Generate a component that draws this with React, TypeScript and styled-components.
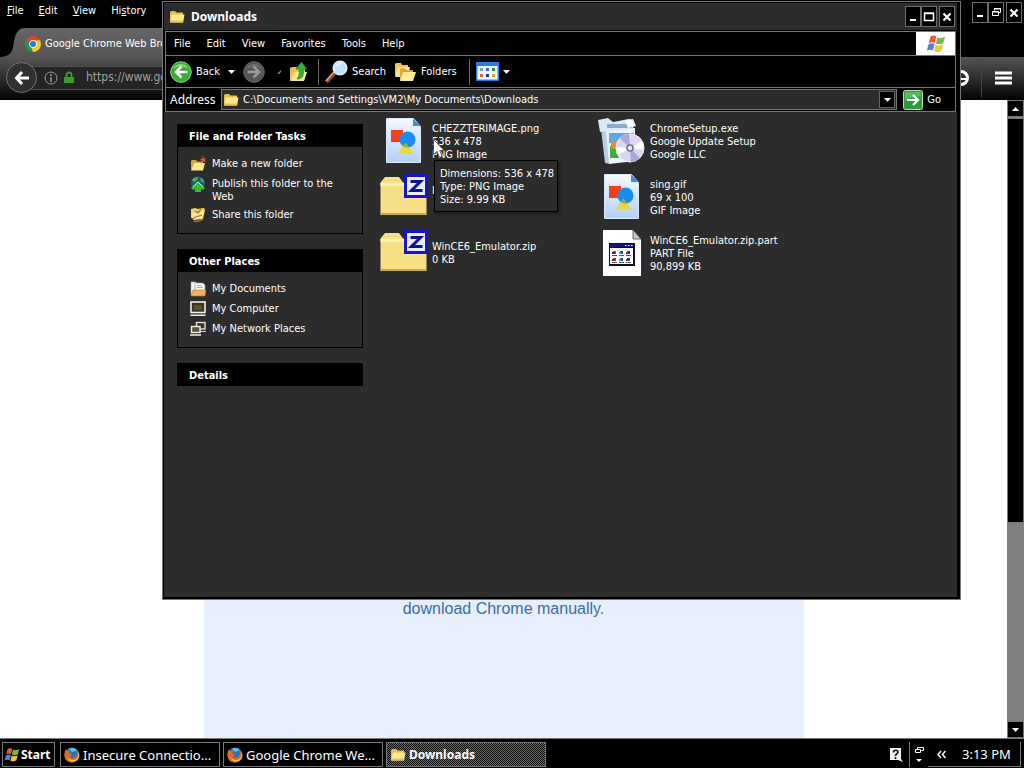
import React from "react";
import styled, { createGlobalStyle } from "styled-components";

const ui = `"DejaVu Sans Condensed", "DejaVu Sans", sans-serif`;
const caption = `"Noto Sans", sans-serif`;

const Global = createGlobalStyle`
  * { box-sizing: border-box; }
  body { margin: 0; background: #000; color: #fff; font-family: ${ui}; font-size: 11px; line-height: 13px; overflow: hidden; }
  button, input { font: inherit; color: inherit; background: none; border: 0; padding: 0; margin: 0; }
  a { color: inherit; text-decoration: none; }
  h1, h2, p { margin: 0; }
  svg { display: block; flex: none; }
`;

const Desktop = styled.div`
  position: relative;
  display: flex;
  flex-direction: column;
  height: 100vh;
  overflow: hidden;
`;

/* ---------- browser ---------- */
const Browser = styled.section`
  flex: 1;
  min-height: 0;
  display: flex;
  flex-direction: column;
`;
const BrowserTop = styled.div`
  display: flex;
  justify-content: space-between;
  height: 28px;
  padding: 2px 2px 0 7px;
`;
const BrowserMenu = styled.nav`
  display: flex;
  gap: 15px;
  height: 17px;
  align-items: center;
`;
const MenuButton = styled.button`
  white-space: nowrap;
`;
const Controls = styled.div`
  display: flex;
`;
const ControlButton = styled.button<{ $gap?: boolean }>`
  display: flex;
  align-items: center;
  justify-content: center;
  width: 16px;
  height: 21px;
  margin-left: ${(p) => (p.$gap ? 2 : 0)}px;
  background: #000;
  border: 1px solid #6e6e6e;
`;
const TabStrip = styled.div`
  display: flex;
  height: 29px;
`;
const Tab = styled.button`
  display: flex;
  align-items: center;
  width: 260px;
  padding-top: 2px;
  background: linear-gradient(#666, #545454);
  gap: 4px;
  white-space: nowrap;
`;
const NavBar = styled.div`
  display: flex;
  align-items: center;
  height: 43px;
  padding: 0 12px 2px 6px;
  background: linear-gradient(#545454, #242424 60%, #020202);
`;
const RoundButton = styled.button`
  display: flex;
  align-items: center;
  justify-content: center;
  width: 31px;
  height: 31px;
  border: 1px solid #707070;
  border-radius: 50%;
  background: #303030;
  z-index: 1;
`;
const UrlBox = styled.label`
  flex: 1;
  display: flex;
  align-items: center;
  gap: 6px;
  height: 24px;
  margin-left: -6px;
  padding-left: 12px;
  background: #242424;
  border: 1px solid #505050;
`;
const UrlText = styled.input`
  flex: 1;
  color: #a0a0a0;
  margin-left: 6px;
  font-size: 12px;
`;
const NavTools = styled.div`
  display: flex;
  align-items: center;
  margin-left: 8px;
  height: 38px;
`;
const ToolIcon = styled.button<{ $line?: boolean }>`
  display: flex;
  align-items: center;
  height: 38px;
  padding-left: 13px;
  margin-left: ${(p) => (p.$line ? 12 : 0)}px;
  border-left: ${(p) => (p.$line ? "1px solid #444" : "0")};
`;
const Viewport = styled.div`
  flex: 1;
  min-height: 0;
  display: flex;
  background: #fff;
`;
const Page = styled.main`
  flex: 1;
  display: flex;
  justify-content: center;
`;
const Notice = styled.div`
  width: 600px;
  padding-top: 499px;
  background: #e8effc;
  text-align: center;
`;
const NoticeLink = styled.a`
  font: 16px/20px "Liberation Sans", sans-serif;
  color: #3a6da4;
`;
const Scrollbar = styled.div`
  display: flex;
  flex-direction: column;
  width: 17px;
  background: #808080;
`;
const ScrollButton = styled.button`
  display: flex;
  align-items: center;
  justify-content: center;
  height: 17px;
  background: #000;
  border: 1px solid #777;
`;
const ScrollTrack = styled.div`
  flex: 1;
`;
const ScrollThumb = styled.div`
  height: 67%;
  margin-top: 1px;
  background: #000;
  border: 1px solid #777;
`;

/* ---------- explorer window ---------- */
const Window = styled.section`
  position: absolute;
  left: 162px;
  top: 1px;
  width: 799px;
  height: 599px;
  display: flex;
  flex-direction: column;
  padding: 1px 3px 2px 1px;
  background: #000;
  border: 1px solid #777;
`;
const TitleBar = styled.header`
  display: flex;
  align-items: center;
  gap: 6px;
  height: 27px;
  padding: 0 2px 0 5px;
  background: #2c2c2c;
`;
const Title = styled.h1`
  flex: 1;
  font: bold 12px/16px ${caption};
`;
const Bars = styled.div`
  margin: 1px 1px 0;
  border: 1px solid #777;
`;
const MenuBar = styled.nav`
  display: flex;
  align-items: center;
  gap: 16px;
  height: 24px;
  padding-left: 8px;
  border-bottom: 1px solid #777;
`;
const Throbber = styled.div`
  display: flex;
  align-items: center;
  justify-content: center;
  width: 39px;
  height: 23px;
  margin-left: auto;
  background: #fff;
`;
const Toolbar = styled.div`
  display: flex;
  align-items: center;
  height: 32px;
  padding-left: 4px;
  border-bottom: 1px solid #777;
`;
const ToolButton = styled.button<{ $after?: number }>`
  display: flex;
  align-items: center;
  gap: 4px;
  margin-right: ${(p) => p.$after ?? 8}px;
`;
const Divider = styled.span`
  width: 1px;
  height: 26px;
  margin-right: 6px;
  background: #666;
`;
const AddressBar = styled.div`
  display: flex;
  align-items: center;
  height: 23px;
  padding-left: 4px;
`;
const AddressLabel = styled.label`
  width: 51px;
  font: 12px/16px ${caption};
`;
const AddressBox = styled.div`
  flex: 1;
  display: flex;
  align-items: center;
  gap: 4px;
  height: 21px;
  padding: 0 1px;
  background: #2c2c2c;
  border: 1px solid #777;
`;
const AddressInput = styled.input`
  flex: 1;
`;
const DropButton = styled.button`
  display: flex;
  align-items: center;
  justify-content: center;
  width: 16px;
  height: 17px;
  background: #000;
  border: 1px solid #666;
`;
const GoButton = styled.button`
  display: flex;
  align-items: center;
  gap: 4px;
  margin: 0 14px 0 6px;
`;
const Body = styled.div`
  flex: 1;
  display: flex;
  gap: 17px;
  padding: 5px 0 0 13px;
  background: #2c2c2c;
`;
const Sidebar = styled.aside`
  display: flex;
  flex-direction: column;
  gap: 15px;
  width: 186px;
  padding-top: 7px;
`;
const PanelTitle = styled.h2`
  height: 23px;
  padding: 3px 12px 0;
  background: #000;
  font: bold 11px/20px ${ui};
`;
const PanelBody = styled.div`
  display: flex;
  flex-direction: column;
  gap: 4px;
  padding: 9px 12px 10px;
  border: 1px solid #000;
  border-top: 0;
`;
const Task = styled.a`
  display: flex;
  gap: 6px;
  min-height: 16px;
`;
const TaskText = styled.span`
  padding-top: 1px;
  max-width: 124px;
`;
const Files = styled.div`
  display: grid;
  grid-template-columns: repeat(2, 218px);
  grid-auto-rows: 48px;
  gap: 8px 0;
  align-content: start;
`;
const FileItem = styled.button`
  display: flex;
  align-items: center;
  gap: 4px;
  text-align: left;
`;
const FileLine = styled.span`
  display: block;
  min-height: 13px;
  white-space: nowrap;
`;
const Tooltip = styled.div`
  position: absolute;
  left: 271px;
  top: 158px;
  padding: 6px 3px 5px 5px;
  background: #2c2c2c;
  border: 1px solid #000;
  box-shadow: 2px 2px 2px #1118;
  white-space: nowrap;
`;
const Pointer = styled.svg`
  position: absolute;
  left: 270px;
  top: 137px;
`;

/* ---------- taskbar ---------- */
const Taskbar = styled.footer`
  display: flex;
  align-items: center;
  height: 30px;
  padding: 2px 3px 0 2px;
  border-top: 1px solid #777;
  font: 13px/18px ${caption};
`;
const StartButton = styled.button`
  display: flex;
  align-items: center;
  gap: 1px;
  height: 25px;
  width: 53px;
  padding-left: 1px;
  margin-right: 5px;
  border: 1px solid #777;
  font-size: 12px;
  font-weight: bold;
`;
const TaskButton = styled.button<{ $active?: boolean }>`
  display: flex;
  align-items: center;
  gap: 3px;
  width: 160px;
  height: 25px;
  padding: 0 3px;
  margin-right: 3px;
  border: 1px solid #777;
  font-size: ${(p) => (p.$active ? 12 : 13)}px;
  font-weight: ${(p) => (p.$active ? "bold" : "normal")};
  background: ${(p) =>
    p.$active ? "repeating-conic-gradient(#6a6a6a 0 25%, #0c0c0c 0 50%) 0 0 / 2px 2px" : "#000"};
`;
const TaskLabel = styled.span`
  white-space: nowrap;
`;
const Tray = styled.div`
  display: flex;
  align-items: center;
  height: 25px;
  margin-left: auto;
`;
const TraySide = styled.button`
  display: flex;
  align-items: center;
  height: 25px;
  padding: 0 4px 0 5px;
  margin-left: 6px;
  border-left: 1px solid #777;
`;
const Clock = styled.div`
  display: flex;
  align-items: center;
  gap: 11px;
  width: 93px;
  height: 25px;
  padding-left: 5px;
  border: 1px solid #777;
  border-width: 0 1px 1px 0;
  white-space: nowrap;
`;

/* ---------- drawings ---------- */
const Caret = ({ up = false }: { up?: boolean }) => (
  <svg width="7" height="4">
    <path d={up ? "M0 4h7L3.500 0z" : "M0 0h7L3.500 4z"} fill="#fff" />
  </svg>
);
const FolderIcon = () => (
  <svg width="16" height="16" viewBox="0 0 16 16">
    <path d="M1 13V3.500L2 2h4l1.500 1.500H14V6H4z" fill="#e8c050" />
    <path d="M1 13.500 3 5.500h12.500L14 13.500z" fill="#ffe98f" />
    <path d="M1 13.500h13l.4-2H2z" fill="#e9bf52" />
  </svg>
);
const NewFolderIcon = () => (
  <svg width="16" height="16" viewBox="0 0 16 16">
    <path d="M1 14V5l1-1h4l1 1.500h6V8H4z" fill="#d9a441" />
    <path d="M1 14.500 4 7h11l-2 7.500z" fill="#ffe690" />
    <path d="m13 0 1 2.500 2-.5-1.200 2L16 6l-2.500-.4L12 7l-.3-2.500L9.500 3.500l2.500-.8z" fill="#e0552a" />
  </svg>
);
const GlobeIcon = () => (
  <svg width="16" height="16" viewBox="0 0 16 16">
    <circle cx="8" cy="7.500" r="7" fill="#17627a" />
    <path d="M2 4c2-3 5-3 6-3L7 4 4 6zM10 2c3 0 4 3 4 5l-3-2z" fill="#4eb25a" />
    <path d="m8 5 7 7-2 2-2-1v3H5v-3l-2 1-2-2z" fill="#39b93a" />
    <path d="m3 11 5-5 5 5" stroke="#c3f2ae" fill="none" />
  </svg>
);
const ShareIcon = () => (
  <svg width="16" height="16" viewBox="0 0 16 16">
    <path d="M1 11V2l5-1 1 1 7-1 1 2-2 9z" fill="#f3d766" />
    <path d="m2 6 12-2-2 8-9 1z" fill="#ffeda0" />
    <path d="M3 12c3-4 6-2 9-4M4 14c3 1 6 0 9-2M5 4l3 2 3-4" stroke="#b07b26" fill="none" strokeWidth="1.400" />
  </svg>
);
const DocsIcon = () => (
  <svg width="16" height="16" viewBox="0 0 16 16">
    <path d="M1 1h5l1 2v11H1z" fill="#f3f3f3" stroke="#aaa" strokeWidth=".6" />
    <path d="M5 2h8l2 2v8H5z" fill="#fff" stroke="#999" strokeWidth=".7" />
    <path d="M7 4.500h5M7 6.500h6" stroke="#aaa" />
    <path d="M1 15 3 9h13l-1 6z" fill="#f5b25c" stroke="#c9772a" strokeWidth=".7" />
  </svg>
);
const ComputerIcon = () => (
  <svg width="16" height="16" viewBox="0 0 16 16">
    <rect x="1" y="1" width="14" height="10.500" fill="#39351e" stroke="#f2eee6" strokeWidth="1.600" />
    <path d="M4 4h8v5H4z" fill="#5e5423" />
    <path d="M.5 13.500h15V15H.5z" fill="#f2eee6" />
  </svg>
);
const NetworkIcon = () => (
  <svg width="16" height="16" viewBox="0 0 16 16">
    <rect x="6.500" y="1.500" width="8.500" height="6.500" fill="#39351e" stroke="#e5e1d8" strokeWidth="1.400" />
    <path d="M8 10.500h8" stroke="#d9d5cc" />
    <rect x="1.500" y="5.500" width="8.500" height="6" fill="#5e5636" stroke="#f2eee6" strokeWidth="1.400" />
    <path d="M0 14h11" stroke="#f2eee6" strokeWidth="1.500" />
  </svg>
);
const WindowsFlag = ({ size = 16 }: { size?: number }) => (
  <svg width={size} height={size} viewBox="0 0 20 20">
    <path d="M4.500 2.500C7 1 8.500 1.500 10.300 2.600L8.800 9C7 8 5.500 7.800 2.800 9z" fill="#e8573a" />
    <path d="M11.300 3.200c2.300 1.300 4.300 1 7.700-.4L17.300 9.300c-3 1.300-5 1.300-7.500.2z" fill="#79b843" />
    <path d="M2.500 10.200C5 9 6.700 9 8.500 10.100L7 16.600C5 15.500 3.300 15.600.800 16.800z" fill="#4b85d8" />
    <path d="M9.500 10.700c2.500 1.300 4.500 1 7.500-.2l-1.600 6.500c-3 1.300-5 1.300-7.400.1z" fill="#f5c534" />
  </svg>
);
const ChromeIcon = () => (
  <svg width="16" height="16" viewBox="0 0 16 16">
    <path d="M8 8 1.100 4A8 8 0 0 1 14.900 4z" fill="#e14434" />
    <path d="M8 8 14.900 4A8 8 0 0 1 8 16z" fill="#fbc924" />
    <path d="M8 8v8A8 8 0 0 1 1.100 4z" fill="#27964b" />
    <path d="M8 4.200h7L11 10l-3 6-2-5z" fill="#fbc924" />
    <path d="M8 4.200h7L14.900 4 8 1z" fill="#e14434" />
    <circle cx="8" cy="8" r="3.800" fill="#fff" />
    <circle cx="8" cy="8" r="3" fill="#2f73dd" />
  </svg>
);
const FirefoxIcon = () => (
  <svg width="16" height="16" viewBox="0 0 16 16">
    <circle cx="8" cy="8" r="7.500" fill="#2775b5" />
    <path d="M5 2c3-2 7-1 8 2-3-1-3 1-5 1z" fill="#65bce8" />
    <path d="M1.500 2.500 3.500 4 6 4.300 5 6.500l3 1-2 2c1 2 4 2 6 0 2-2 1-5 .5-6.500C15 5 16 8 15 11c-2 5-10 6-13 2C0 10 0 6 1.500 2.500z" fill="#e6671e" />
    <path d="M14 5c1 4 0 7-4 8-3 .5-5-1-6-3 0 3 3 5 6 4.500 5-1 6-6 4-9.500z" fill="#ffc43a" />
  </svg>
);
const NavArrowIcon = ({ forward = false }: { forward?: boolean }) => (
  <svg width="22" height="22" viewBox="0 0 22 22">
    <circle cx="11" cy="11" r="10.300" fill={forward ? "#555" : "#37ad31"} stroke={forward ? "#686868" : "#8ddc80"} />
    <path d="M3 8a9 9 0 0 1 16 0c-5-3-11-3-16 0z" fill={forward ? "#6c6c6c" : "#7fd670"} />
    <path
      d={forward ? "M4.500 11h11M10.500 5.500 16 11l-5.500 5.500" : "M17.500 11h-11M11.500 5.500 6 11l5.500 5.500"}
      stroke={forward ? "#9a9a9a" : "#fff"}
      strokeWidth="2.600"
      fill="none"
    />
  </svg>
);
const UpFolderIcon = () => (
  <svg width="21" height="22" viewBox="0 0 21 22">
    <path d="M1 20V7l2-1h5l1 2h7v10z" fill="#e8c050" />
    <path d="m2 20 3-9h13l-3 9z" fill="#ffe888" />
    <path d="M8 18c6 0 7-4 6-10h4L12.500 1 7 8h3.500c0 5 0 7-2.500 10z" fill="#35b336" stroke="#137a1c" strokeWidth=".7" />
  </svg>
);
const SearchIcon = () => (
  <svg width="23" height="24" viewBox="0 0 23 24">
    <path d="m1.500 22 8-9" stroke="#8c4b2a" strokeWidth="4" />
    <path d="m1 21 8-9" stroke="#e6a36e" strokeWidth="1.500" />
    <circle cx="15" cy="8" r="6.800" fill="#bfe2f8" stroke="#e6f2fb" strokeWidth="1.500" />
    <path d="M10.500 7c1-4 5-5 7-3-3 0-5 1-7 3z" fill="#fff" />
  </svg>
);
const FoldersIcon = () => (
  <svg width="23" height="22" viewBox="0 0 23 22">
    <path d="M1 14V3l1-1h5l1 2h6v10z" fill="#ecc553" />
    <path d="m1 16 3-10h12l-2 10z" fill="#ffe890" />
    <path d="M6 19V8l1-1h4l1 2h7v10z" fill="#d9a83a" />
    <path d="m6 20 3-9h13l-3 9z" fill="#ffeb9a" />
  </svg>
);
const ViewsIcon = () => (
  <svg width="23" height="19" viewBox="0 0 23 19">
    <rect width="23" height="19" fill="#2b7be0" />
    <rect x="1.500" y="4" width="20" height="13.500" fill="#f5f8ff" />
    <path d="M4 6h3v3H4z" fill="#7ba1d8" />
    <path d="M10 6h3v3h-3z" fill="#3b68c8" />
    <path d="M16 6h3v3h-3z" fill="#2e8e3a" />
    <path d="M4 12h3v3H4z" fill="#e06a3a" />
    <path d="M10 12h3v3h-3z" fill="#193a93" />
    <path d="M16 12h3v3h-3z" fill="#d9a634" />
  </svg>
);
const GoIcon = () => (
  <svg width="20" height="20" viewBox="0 0 20 20">
    <rect x=".5" y=".5" width="19" height="19" rx="2" fill="#2f9a3a" stroke="#b9dfb6" />
    <path d="M2 2h16v5C12 6 6 8 2 11z" fill="#5cb960" />
    <path d="M4 10h11M10 5l5 5-5 5" stroke="#fff" strokeWidth="2.200" fill="none" />
  </svg>
);
const ImageFileIcon = () => (
  <svg width="48" height="48" viewBox="0 0 48 48">
    <defs>
      <linearGradient id="sheet" x1="0" y1="0" x2="0" y2="1">
        <stop offset="0" stopColor="#f4faff" />
        <stop offset="1" stopColor="#b4d0fa" />
      </linearGradient>
    </defs>
    <path d="M6.500 1.500h27l7 8v36h-34z" fill="url(#sheet)" stroke="#dce9fc" />
    <path d="M33 1.500V9h7.500z" fill="#3c8be8" />
    <path d="M11 13h12v12H11z" fill="#f4401b" />
    <circle cx="27.500" cy="22.500" r="8" fill="#1c8df0" />
    <path d="m25.500 26 8 10.500h-16z" fill="#e9d83a" />
    <path d="m25.500 26 3.500 4.500a8 8 0 0 1-6-1.200z" fill="#82b83c" />
  </svg>
);
const ZipIcon = () => (
  <svg width="48" height="48" viewBox="0 0 48 48">
    <path d="M.5 42V9.500L5 4h14l4 5.500h23.500V42z" fill="#f6df87" />
    <path d="M.5 10h46v3H.5z" fill="#fdf0b0" />
    <path d="M.5 40h46v2H.5z" fill="#cfa94c" />
    <rect x="25.500" y="2.500" width="21" height="21" fill="#e8ecff" stroke="#1414d2" strokeWidth="3" />
    <path d="M30.500 8.500h10L31.500 17.500h11" fill="none" stroke="#10108c" strokeWidth="3" />
  </svg>
);
const InstallerIcon = () => (
  <svg width="48" height="48" viewBox="0 0 48 48">
    <path d="m3 12 4 34 6 1V13z" fill="#b9cde8" />
    <path d="m8 12 29-1v33l-26 3z" fill="#eef5ff" />
    <path d="M11 16h25v10H11z" fill="#55a9ec" />
    <path d="M12 29h9v12h-9z" fill="#41ad3d" />
    <path d="m13 26 8-4v9l-8 1z" fill="#ef8a34" />
    <path d="M0 3 10 1l5 4 16-3 5 3-1 7-27 2-6 1z" fill="#dbe8f8" />
    <path d="M9 7h25v4H9z" fill="#8da9cf" />
    <path d="m27 3 8-1 3 7-8 2z" fill="#f6faff" />
    <circle cx="32" cy="31" r="14" fill="#d8d7ee" stroke="#f7f7ff" />
    <path d="M32 31 22 21a14 14 0 0 1 9-4zM32 31l10 10a14 14 0 0 1-9 4z" fill="#aaa5dc" />
    <path d="m32 31 12-7a14 14 0 0 1 1 9zM32 31l-12 7a14 14 0 0 1-1-8z" fill="#fff" />
    <circle cx="32" cy="31" r="3" fill="#eee" stroke="#6f6c96" strokeWidth="1.500" />
  </svg>
);
const PartIcon = () => (
  <svg width="48" height="48" viewBox="0 0 48 48">
    <path d="M5 1h30l8 9v37H5z" fill="#fff" />
    <path d="M35 1v9h8z" fill="#ccc" stroke="#444" strokeWidth=".8" />
    <path d="M11 14h26v23H11z" fill="#111" />
    <path d="M12 19h23v16H12z" fill="#fff" />
    <path d="M12 15h23v3H12z" fill="#14147b" />
    <path d="M27 16.500h1.500M30 16.500h1.500M33 16.500h1.500" stroke="#fff" />
    {[15, 22, 29].map((x, i) => (
      <g key={x}>
        <path d={`M${x} 22h3v3h-3zM${x} 29h3v3h-3z`} fill={["#b5303a", "#1c6488", "#3030a5"][i]} />
        <path d={`M${x - 1} 23h2v2h-2zM${x - 1} 30h2v2h-2z`} fill={["#2b2b80", "#32a0b8", "#a82832"][i]} />
        <path d={`M${x - 1} 26.500h5M${x - 1} 33.500h5`} stroke="#555" />
      </g>
    ))}
  </svg>
);
const MinimizeGlyph = () => (
  <svg width="12" height="12"><path d="M3 9h6" stroke="#fff" strokeWidth="2" /></svg>
);
const MaximizeGlyph = () => (
  <svg width="12" height="12"><path d="M1.500 2.500h9v7h-9zM1 2h10" stroke="#fff" fill="none" strokeWidth="1.500" /></svg>
);
const RestoreGlyph = () => (
  <svg width="11" height="11"><path d="M3.500 3.500v-2h6v4h-2M1.500 4.500h6v4h-6zM3 2h7M1 5h7" stroke="#fff" fill="none" /></svg>
);
const CloseGlyph = () => (
  <svg width="10" height="10"><path d="m1.500 1.500 7 7m0-7-7 7" stroke="#fff" strokeWidth="2.200" /></svg>
);

const WindowControls = ({ maximized = false }: { maximized?: boolean }) => (
  <Controls>
    <ControlButton aria-label="Minimize"><MinimizeGlyph /></ControlButton>
    <ControlButton aria-label={maximized ? "Restore" : "Maximize"}>
      {maximized ? <RestoreGlyph /> : <MaximizeGlyph />}
    </ControlButton>
    <ControlButton aria-label="Close" $gap><CloseGlyph /></ControlButton>
  </Controls>
);

const files = [
  { icon: <ImageFileIcon />, lines: ["CHEZZTERIMAGE.png", "536 x 478", "PNG Image"] },
  { icon: <InstallerIcon />, lines: ["ChromeSetup.exe", "Google Update Setup", "Google LLC"] },
  { icon: <ZipIcon />, lines: ["I", ""] },
  { icon: <ImageFileIcon />, lines: ["sing.gif", "69 x 100", "GIF Image"] },
  { icon: <ZipIcon />, lines: ["WinCE6_Emulator.zip", "0 KB"] },
  { icon: <PartIcon />, lines: ["WinCE6_Emulator.zip.part", "PART File", "90,899 KB"] },
];

const tasks = [
  { icon: <NewFolderIcon />, text: "Make a new folder" },
  { icon: <GlobeIcon />, text: "Publish this folder to the Web" },
  { icon: <ShareIcon />, text: "Share this folder" },
];
const places = [
  { icon: <DocsIcon />, text: "My Documents" },
  { icon: <ComputerIcon />, text: "My Computer" },
  { icon: <NetworkIcon />, text: "My Network Places" },
];

const Panel = ({ title, items }: { title: string; items?: typeof tasks }) => (
  <section>
    <PanelTitle>{title}</PanelTitle>
    {items && (
      <PanelBody>
        {items.map((item) => (
          <Task key={item.text} href="#">
            {item.icon}
            <TaskText>{item.text}</TaskText>
          </Task>
        ))}
      </PanelBody>
    )}
  </section>
);

const BrowserWindow = () => (
  <Browser>
    <BrowserTop>
      <BrowserMenu>
        <MenuButton><u>F</u>ile</MenuButton>
        <MenuButton><u>E</u>dit</MenuButton>
        <MenuButton><u>V</u>iew</MenuButton>
        <MenuButton>Hi<u>s</u>tory</MenuButton>
      </BrowserMenu>
      <WindowControls maximized />
    </BrowserTop>
    <TabStrip>
      <svg width="25" height="29">
        <defs>
          <linearGradient id="tab" x1="0" y1="0" x2="0" y2="1">
            <stop offset="0" stopColor="#666" />
            <stop offset="1" stopColor="#545454" />
          </linearGradient>
        </defs>
        <path d="M0 29C16 28 12 18 15 9 17 3 20 0 25 0v29z" fill="url(#tab)" />
      </svg>
      <Tab><ChromeIcon />Google Chrome Web Browser</Tab>
    </TabStrip>
    <NavBar>
      <RoundButton aria-label="Back">
        <svg width="16" height="14"><path d="M15 7H3M8 1 2.500 7 8 13" stroke="#fff" strokeWidth="3" fill="none" /></svg>
      </RoundButton>
      <UrlBox>
        <svg width="14" height="14"><circle cx="7" cy="7" r="6" fill="none" stroke="#999" /><path d="M7 6v5M7 3v2" stroke="#999" strokeWidth="1.500" /></svg>
        <svg width="10" height="13"><path d="M2.500 6V4a2.500 2.500 0 0 1 5 0v2" stroke="#3f9b2e" strokeWidth="1.800" fill="none" /><path d="M0 6h10v6H0z" fill="#3f9b2e" /></svg>
        <UrlText aria-label="Location" defaultValue="https://www.google.com/chrome" />
      </UrlBox>
      <NavTools>
        <ToolIcon aria-label="Smile">
          <svg width="16" height="16"><circle cx="8" cy="8" r="6.500" fill="none" stroke="#fff" strokeWidth="3" /><path d="M8 9h6" stroke="#fff" strokeWidth="2" /></svg>
        </ToolIcon>
        <ToolIcon aria-label="Open menu" $line>
          <svg width="17" height="14"><path d="M0 2h17M0 7h17M0 12h17" stroke="#fff" strokeWidth="3" /></svg>
        </ToolIcon>
      </NavTools>
    </NavBar>
    <Viewport>
      <Page>
        <Notice><NoticeLink href="#">download Chrome manually.</NoticeLink></Notice>
      </Page>
      <Scrollbar>
        <ScrollButton aria-label="Scroll up"><Caret up /></ScrollButton>
        <ScrollTrack><ScrollThumb /></ScrollTrack>
        <ScrollButton aria-label="Scroll down"><Caret /></ScrollButton>
      </Scrollbar>
    </Viewport>
  </Browser>
);

const ExplorerWindow = () => (
  <Window>
    <TitleBar>
      <FolderIcon />
      <Title>Downloads</Title>
      <WindowControls />
    </TitleBar>
    <Bars>
      <MenuBar>
        {["File", "Edit", "View", "Favorites", "Tools", "Help"].map((name) => (
          <MenuButton key={name}>{name}</MenuButton>
        ))}
        <Throbber><WindowsFlag size={20} /></Throbber>
      </MenuBar>
      <Toolbar>
        <ToolButton><NavArrowIcon />Back</ToolButton>
        <ToolButton aria-label="Back history"><Caret /></ToolButton>
        <ToolButton aria-label="Forward" $after={12}><NavArrowIcon forward /></ToolButton>
        <ToolButton aria-label="Forward history">
          <svg width="4" height="4"><path d="M0 4 4 0v2L2 4z" fill="#888" /></svg>
        </ToolButton>
        <ToolButton aria-label="Up"><UpFolderIcon /></ToolButton>
        <Divider />
        <ToolButton><SearchIcon />Search</ToolButton>
        <ToolButton $after={12}><FoldersIcon />Folders</ToolButton>
        <Divider />
        <ToolButton aria-label="Views"><ViewsIcon /><Caret /></ToolButton>
      </Toolbar>
      <AddressBar>
        <AddressLabel htmlFor="address">Address</AddressLabel>
        <AddressBox>
          <FolderIcon />
          <AddressInput id="address" defaultValue={"C:\\Documents and Settings\\VM2\\My Documents\\Downloads"} />
          <DropButton aria-label="Show addresses"><Caret /></DropButton>
        </AddressBox>
        <GoButton><GoIcon />Go</GoButton>
      </AddressBar>
    </Bars>
    <Body>
      <Sidebar>
        <Panel title="File and Folder Tasks" items={tasks} />
        <Panel title="Other Places" items={places} />
        <Panel title="Details" />
      </Sidebar>
      <Files>
        {files.map((file, i) => (
          <FileItem key={i}>
            {file.icon}
            <span>
              {file.lines.map((line, n) => (
                <FileLine key={n}>{line}</FileLine>
              ))}
            </span>
          </FileItem>
        ))}
      </Files>
    </Body>
    <Tooltip role="tooltip">
      <p>Dimensions: 536 x 478</p>
      <p>Type: PNG Image</p>
      <p>Size: 9.99 KB</p>
    </Tooltip>
    <Pointer width="12" height="20" viewBox="0 0 12 20">
      <path d="M.5.5v15.200l3.500-3.300 2.500 6 2.700-1.200-2.500-5.700h4.600z" fill="#fff" stroke="#222" strokeWidth=".7" />
    </Pointer>
  </Window>
);

export default function App() {
  return (
    <Desktop>
      <Global />
      <BrowserWindow />
      <ExplorerWindow />
      <Taskbar>
        <StartButton><WindowsFlag />Start</StartButton>
        <TaskButton><FirefoxIcon /><TaskLabel>Insecure Connectio...</TaskLabel></TaskButton>
        <TaskButton><FirefoxIcon /><TaskLabel>Google Chrome We...</TaskLabel></TaskButton>
        <TaskButton $active><FolderIcon /><TaskLabel>Downloads</TaskLabel></TaskButton>
        <Tray>
          <svg width="13" height="14"><path d="M0 0h11v11l2 3-5-2H0z" fill="#f4f4ea" /><path d="M3.500 4.500c0-3 4.500-3 4.500-.5C8 6 5.500 5.500 5.500 8M5.500 9v2" stroke="#111" strokeWidth="1.600" fill="none" /></svg>
          <TraySide aria-label="Window options">
            <svg width="9" height="18"><path d="M2.500 3.500v-2h6v3h-2M.5 3.500h5v3h-5z" stroke="#fff" fill="none" /><path d="M1 13h6l-3 3z" fill="#fff" /></svg>
          </TraySide>
          <Clock>
            <svg width="18" height="9"><path d="M8 1 5 4.500 8 8M12.500 1l-3 3.500 3 3.500" stroke="#fff" strokeWidth="1.500" fill="none" /></svg>
            <time>3:13 PM</time>
          </Clock>
        </Tray>
      </Taskbar>
    </Desktop>
  );
}
